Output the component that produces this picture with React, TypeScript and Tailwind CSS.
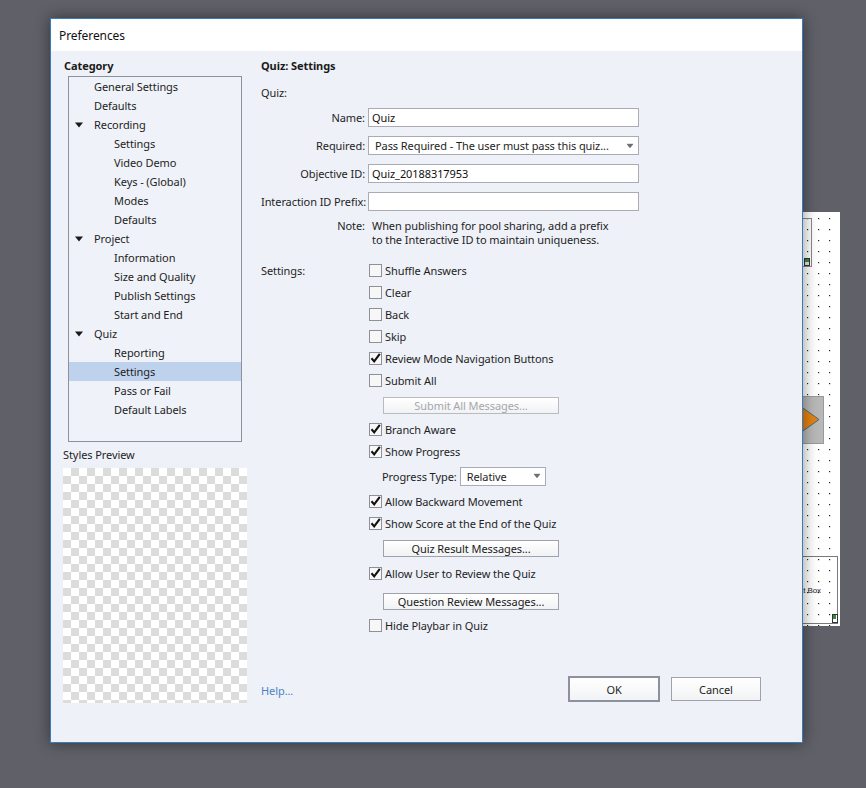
import React from 'react';

const font = { fontFamily: '"Noto Sans", "Open Sans", sans-serif' };

type TreeItem = { label: string; level: 0 | 1; expandable?: boolean; selected?: boolean };

const TREE: TreeItem[] = [
  { label: 'General Settings', level: 0 },
  { label: 'Defaults', level: 0 },
  { label: 'Recording', level: 0, expandable: true },
  { label: 'Settings', level: 1 },
  { label: 'Video Demo', level: 1 },
  { label: 'Keys - (Global)', level: 1 },
  { label: 'Modes', level: 1 },
  { label: 'Defaults', level: 1 },
  { label: 'Project', level: 0, expandable: true },
  { label: 'Information', level: 1 },
  { label: 'Size and Quality', level: 1 },
  { label: 'Publish Settings', level: 1 },
  { label: 'Start and End', level: 1 },
  { label: 'Quiz', level: 0, expandable: true },
  { label: 'Reporting', level: 1 },
  { label: 'Settings', level: 1, selected: true },
  { label: 'Pass or Fail', level: 1 },
  { label: 'Default Labels', level: 1 },
];

const DownArrow: React.FC<{ className?: string }> = ({ className }) => (
  <svg width="8" height="6" viewBox="0 0 8 6" className={className}>
    <path d="M0 0.5 L8 0.5 L4 5.5 Z" fill="currentColor" />
  </svg>
);

const TreeRow: React.FC<{ item: TreeItem }> = ({ item }) => (
  <div className={`relative flex items-center h-[19px] ${item.selected ? 'bg-[#bed2ee]' : ''}`}>
    {item.expandable && <DownArrow className="absolute left-[6px] top-[7px] text-[#1a1a1a]" />}
    <span className={item.level === 0 ? 'pl-[25px]' : 'pl-[45px]'}>{item.label}</span>
  </div>
);

const Field: React.FC<{ label: string; value?: string }> = ({ label, value }) => (
  <div className="flex items-center h-[19px] mb-[9px]">
    <div className="w-[107px] text-right pr-[3px] whitespace-nowrap">{label}</div>
    <div className="w-[271px] h-[19px] bg-white border border-[#a9acb4] flex items-center px-[3px] text-[#111]">
      {value}
    </div>
  </div>
);

const Check: React.FC<{ checked?: boolean; label: string }> = ({ checked, label }) => (
  <div className="flex items-center h-[22px]">
    <div className="relative w-[13px] h-[13px] bg-[#f7f7f7] border border-[#8e9097] shrink-0">
      {checked && (
        <svg width="13" height="13" viewBox="0 0 13 13" className="absolute left-[-1px] top-[-1px]">
          <path d="M2.5 6.2 L5.2 9.4 L10.8 1.8" fill="none" stroke="#111" strokeWidth="2.1" />
        </svg>
      )}
    </div>
    <span className="ml-[3px] whitespace-nowrap">{label}</span>
  </div>
);

const SmallButton: React.FC<{ label: string; disabled?: boolean }> = ({ label, disabled }) => (
  <div
    className={`ml-[14px] w-[176px] h-[17px] flex items-center justify-center border bg-gradient-to-b from-white to-[#f1f2f4] ${
      disabled ? 'border-[#b9bbc1] text-[#a5a7ab]' : 'border-[#9fa2aa] text-[#1a1a1a]'
    }`}
  >
    {label}
  </div>
);

const CanvasPiece: React.FC = () => (
  <svg width="60" height="414" viewBox="0 0 60 414" className="absolute left-[780px] top-[212px]">
    <defs>
      <pattern id="dots" x="0" y="0" width="11" height="11" patternUnits="userSpaceOnUse">
        <rect x="5" y="6" width="1.2" height="1.2" fill="#222" />
      </pattern>
    </defs>
    <rect x="0" y="0" width="60" height="414" fill="#fff" />
    <rect x="0" y="0" width="60" height="414" fill="url(#dots)" />
    <rect x="0.5" y="6.5" width="31" height="48" fill="none" stroke="#8a8a8a" />
    <rect x="24.5" y="46.5" width="5" height="7" fill="#dfe8df" stroke="#333" />
    <rect x="25" y="47" width="4" height="3" fill="#3b8a3b" />
    <rect x="0.5" y="184.5" width="43" height="47" fill="#b8b8b8" stroke="#9a9a9a" />
    <path d="M16 191 L39 207.5 L16 224 Z" fill="#e68110" stroke="#3f6f7a" strokeWidth="1" />
    <rect x="0.5" y="344.5" width="57" height="67" fill="none" stroke="#7a7a7a" />
    <text x="41" y="381" textAnchor="end" fontSize="8" fontFamily="Liberation Sans, sans-serif" fill="#222">
      Text Box
    </text>
    <rect x="52.5" y="402.5" width="5" height="8" fill="#fff" stroke="#333" />
    <rect x="53" y="403" width="3" height="4" fill="#3b8a3b" />
  </svg>
);

export default function App() {
  return (
    <div
      className="relative w-[866px] h-[788px] overflow-hidden bg-[#5f6068] text-[11px] leading-[15px] tracking-[-0.08px] text-[#1e1e1e]"
      style={font}
    >
      <CanvasPiece />
      <div className="pt-[18px] pl-[50px] relative">
        <div className="w-[753px] h-[725px] border border-[#3a7bbb] flex flex-col shadow-[0_0_14px_rgba(0,0,0,0.45)]">
          <div className="h-[32px] bg-white flex items-center pl-[8px] text-[12px] text-[#111]">Preferences</div>
          <div className="flex-1 bg-[#eef1f8] flex">
            {/* left column */}
            <div className="w-[210px] pl-[12px] pt-[7px] flex flex-col">
              <div className="ml-[1px] font-bold text-[#1a1a1a]">Category</div>
              <div className="mt-[3px] ml-[5px] w-[174px] h-[366px] border border-[#8c919e] bg-[#eff2f8]">
                {TREE.map((item, i) => (
                  <TreeRow key={i} item={item} />
                ))}
              </div>
              <div className="mt-[5px]">Styles Preview</div>
              <div className="mt-[6px] w-[184px] h-[235px] bg-[conic-gradient(#dcdcdc_25%,#ffffff_0_50%,#dcdcdc_0_75%,#ffffff_0)] bg-[length:16px_16px]" />
            </div>

            {/* right column */}
            <div className="flex-1 flex flex-col pt-[7px]">
              <div className="font-bold text-[#1a1a1a]">Quiz: Settings</div>
              <div className="mt-[12px]">Quiz:</div>
              <div className="mt-[8px]">
                <Field label="Name:" value="Quiz" />
                <div className="flex items-center h-[19px] mb-[9px]">
                  <div className="w-[107px] text-right pr-[3px]">Required:</div>
                  <div className="w-[271px] h-[19px] bg-white border border-[#a9acb4] flex items-center pl-[6px] pr-[4px]">
                    <span className="flex-1 whitespace-nowrap overflow-hidden">Pass Required - The user must pass this quiz...</span>
                    <DownArrow className="text-[#6c6f76] scale-90" />
                  </div>
                </div>
                <Field label="Objective ID:" value="Quiz_20188317953" />
                <Field label="Interaction ID Prefix:" />
              </div>
              <div className="flex mt-[-1px] leading-[14px]">
                <div className="w-[104px] text-right">Note:</div>
                <div className="ml-[7px]">
                  When publishing for pool sharing, add a prefix
                  <br />
                  to the Interactive ID to maintain uniqueness.
                </div>
              </div>

              <div className="flex mt-[12px]">
                <div className="w-[108px] h-[22px] flex items-center">Settings:</div>
                <div className="flex flex-col">
                  <Check label="Shuffle Answers" />
                  <Check label="Clear" />
                  <Check label="Back" />
                  <Check label="Skip" />
                  <Check checked label="Review Mode Navigation Buttons" />
                  <Check label="Submit All" />
                  <div className="pt-[6px] pb-[4px]">
                    <SmallButton label="Submit All Messages..." disabled />
                  </div>
                  <Check checked label="Branch Aware" />
                  <Check checked label="Show Progress" />
                  <div className="h-[28px] flex items-center">
                    <span className="ml-[13px]">Progress Type:</span>
                    <div className="ml-[3px] w-[86px] h-[19px] bg-white border border-[#a9acb4] flex items-center pl-[6px] pr-[4px]">
                      <span className="flex-1">Relative</span>
                      <DownArrow className="text-[#6c6f76] scale-90" />
                    </div>
                  </div>
                  <Check checked label="Allow Backward Movement" />
                  <Check checked label="Show Score at the End of the Quiz" />
                  <div className="pt-[6px] pb-[5px]">
                    <SmallButton label="Quiz Result Messages..." />
                  </div>
                  <Check checked label="Allow User to Review the Quiz" />
                  <div className="pt-[9px] pb-[4px]">
                    <SmallButton label="Question Review Messages..." />
                  </div>
                  <Check label="Hide Playbar in Quiz" />
                </div>
              </div>

              <div className="mt-auto pb-[40px] flex items-center">
                <span className="text-[#4a85c2] mt-[3px]">Help...</span>
                <div className="ml-auto mr-[41px] flex items-center">
                  <div className="w-[92px] h-[26px] border-2 border-[#8d919b] bg-gradient-to-b from-white to-[#f2f3f5] flex items-center justify-center">
                    OK
                  </div>
                  <div className="ml-[11px] w-[90px] h-[24px] border border-[#9fa2aa] bg-gradient-to-b from-white to-[#f2f3f5] flex items-center justify-center">
                    Cancel
                  </div>
                </div>
              </div>
            </div>
          </div>
        </div>
      </div>
    </div>
  );
}
